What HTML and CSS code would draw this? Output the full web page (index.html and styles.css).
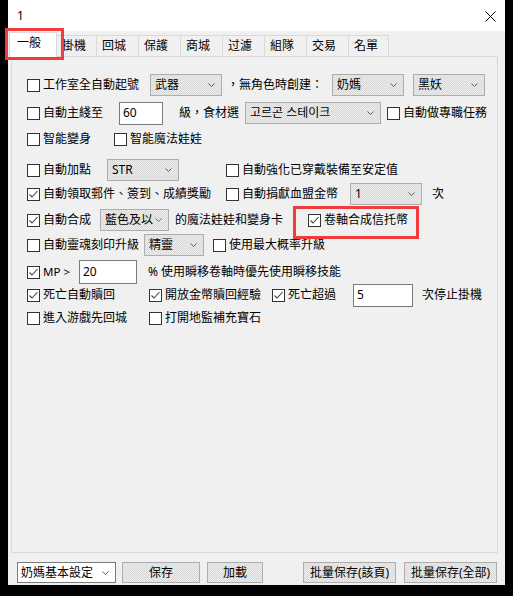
FILE: index.html
```html
<!DOCTYPE html>
<html lang="zh-Hant">
<head>
<meta charset="utf-8">
<title>1</title>
<link rel="stylesheet" href="styles.css">
</head>
<body>
<div class="window">
  <div class="titlebar">
    <span class="title">1</span>
    <svg class="close" width="11" height="11" viewBox="0 0 11 11"><path d="M0.5 0.5 L10.5 10.5 M10.5 0.5 L0.5 10.5" stroke="#000" stroke-width="1" fill="none"/></svg>
  </div>
  <div class="tabs">
    <div class="tab active">一般</div>
    <div class="tab narrow">掛機</div>
    <div class="tab">回城</div>
    <div class="tab">保護</div>
    <div class="tab">商城</div>
    <div class="tab">过濾</div>
    <div class="tab">組隊</div>
    <div class="tab">交易</div>
    <div class="tab narrow">名單</div>
  </div>
  <div class="panel">
    <div class="row">
      <label class="cb c123"><span class="box"></span><span>工作室全自動起號</span></label>
      <div class="sel w72"><span>武器</span><svg class="chev" width="7" height="4" viewBox="0 0 7 4"><polyline points="0.5,0.5 3.5,3.5 6.5,0.5" fill="none" stroke="#666"/></svg></div>
      <span class="txt t1">，無角色時創建：</span>
      <div class="sel w72"><span>奶媽</span><svg class="chev" width="7" height="4" viewBox="0 0 7 4"><polyline points="0.5,0.5 3.5,3.5 6.5,0.5" fill="none" stroke="#666"/></svg></div>
      <div class="sel w72 ml9"><span>黑妖</span><svg class="chev" width="7" height="4" viewBox="0 0 7 4"><polyline points="0.5,0.5 3.5,3.5 6.5,0.5" fill="none" stroke="#666"/></svg></div>
    </div>
    <div class="row g6">
      <label class="cb c92"><span class="box"></span><span>自動主綫至</span></label>
      <div class="inp w44"><span>60</span></div>
      <span class="txt t2">級，食材選</span>
      <div class="sel w136"><span class="kr">고르곤 스테이크</span><svg class="chev" width="7" height="4" viewBox="0 0 7 4"><polyline points="0.5,0.5 3.5,3.5 6.5,0.5" fill="none" stroke="#666"/></svg></div>
      <label class="cb ml6"><span class="box"></span><span>自動做專職任務</span></label>
    </div>
    <div class="row g4">
      <label class="cb c87"><span class="box"></span><span>智能變身</span></label>
      <label class="cb"><span class="box"></span><span>智能魔法娃娃</span></label>
    </div>
    <div class="row g9">
      <label class="cb c80"><span class="box"></span><span>自動加點</span></label>
      <div class="sel w72"><span>STR</span><svg class="chev" width="7" height="4" viewBox="0 0 7 4"><polyline points="0.5,0.5 3.5,3.5 6.5,0.5" fill="none" stroke="#666"/></svg></div>
      <label class="cb ml47"><span class="box"></span><span>自動強化已穿戴裝備至安定值</span></label>
    </div>
    <div class="row g2">
      <label class="cb c199"><span class="box checked"><svg width="11" height="11" viewBox="0 0 11 11"><polyline points="1.5,5.5 4,8 9.5,2" fill="none" stroke="#444" stroke-width="1.1"/></svg></span><span>自動領取郵件、簽到、成績獎勵</span></label>
      <label class="cb c124"><span class="box"></span><span>自動捐獻血盟金幣</span></label>
      <div class="sel w72"><span>1</span><svg class="chev" width="7" height="4" viewBox="0 0 7 4"><polyline points="0.5,0.5 3.5,3.5 6.5,0.5" fill="none" stroke="#666"/></svg></div>
      <span class="txt ml10">次</span>
    </div>
    <div class="row g4">
      <label class="cb c73"><span class="box checked"><svg width="11" height="11" viewBox="0 0 11 11"><polyline points="1.5,5.5 4,8 9.5,2" fill="none" stroke="#444" stroke-width="1.1"/></svg></span><span>自動合成</span></label>
      <div class="sel w69"><span>藍色及以</span><svg class="chev" width="7" height="4" viewBox="0 0 7 4"><polyline points="0.5,0.5 3.5,3.5 6.5,0.5" fill="none" stroke="#666"/></svg></div>
      <span class="txt t6">的魔法娃娃和變身卡</span>
      <label class="cb hl"><span class="box checked"><svg width="11" height="11" viewBox="0 0 11 11"><polyline points="1.5,5.5 4,8 9.5,2" fill="none" stroke="#444" stroke-width="1.1"/></svg></span><span>卷軸合成信托幣</span></label>
    </div>
    <div class="row g3">
      <label class="cb c117"><span class="box"></span><span>自動靈魂刻印升級</span></label>
      <div class="sel w60"><span>精靈</span><svg class="chev" width="7" height="4" viewBox="0 0 7 4"><polyline points="0.5,0.5 3.5,3.5 6.5,0.5" fill="none" stroke="#666"/></svg></div>
      <label class="cb ml9"><span class="box"></span><span>使用最大概率升級</span></label>
    </div>
    <div class="row g5">
      <label class="cb c52"><span class="box checked"><svg width="11" height="11" viewBox="0 0 11 11"><polyline points="1.5,5.5 4,8 9.5,2" fill="none" stroke="#444" stroke-width="1.1"/></svg></span><span class="latin">MP &gt;</span></label>
      <div class="inp w58 h24"><span>20</span></div>
      <span class="txt t8">% 使用瞬移卷軸時優先使用瞬移技能</span>
    </div>
    <div class="row g1">
      <label class="cb c122"><span class="box checked"><svg width="11" height="11" viewBox="0 0 11 11"><polyline points="1.5,5.5 4,8 9.5,2" fill="none" stroke="#444" stroke-width="1.1"/></svg></span><span>死亡自動贖回</span></label>
      <label class="cb c123"><span class="box checked"><svg width="11" height="11" viewBox="0 0 11 11"><polyline points="1.5,5.5 4,8 9.5,2" fill="none" stroke="#444" stroke-width="1.1"/></svg></span><span>開放金幣贖回經驗</span></label>
      <label class="cb c81"><span class="box checked"><svg width="11" height="11" viewBox="0 0 11 11"><polyline points="1.5,5.5 4,8 9.5,2" fill="none" stroke="#444" stroke-width="1.1"/></svg></span><span>死亡超過</span></label>
      <div class="inp w60"><span>5</span></div>
      <span class="txt t9">次停止掛機</span>
    </div>
    <div class="row g1">
      <label class="cb c122"><span class="box"></span><span>進入游戲先回城</span></label>
      <label class="cb"><span class="box"></span><span>打開地監補充寶石</span></label>
    </div>
  </div>
  <div class="footer">
    <div class="fsel"><span>奶媽基本設定</span><svg class="chev" width="7" height="4" viewBox="0 0 7 4"><polyline points="0.5,0.5 3.5,3.5 6.5,0.5" fill="none" stroke="#666"/></svg></div>
    <div class="btn b78 ml6">保存</div>
    <div class="btn b56 ml7">加載</div>
    <div class="btn b93 ml40">批量保存(該頁)</div>
    <div class="btn b93 ml8">批量保存(全部)</div>
  </div>
</div>
</body>
</html>
```
FILE: styles.css
```css
* { box-sizing: border-box; }
html, body { margin: 0; padding: 0; }
body {
  background: #000;
  width: 513px;
  height: 596px;
  overflow: hidden;
  font-family: "Noto Sans", "Noto Sans CJK TC", sans-serif;
  font-size: 12px;
  line-height: 16px;
  color: #000;
}
.window {
  margin-left: 8px;
  width: 497px;
  height: 585px;
  background: #f0f0f0;
  display: flex;
  flex-direction: column;
}
.titlebar {
  flex: none;
  height: 31px;
  background: #fff;
  display: flex;
  align-items: center;
  justify-content: space-between;
  padding: 0 9px;
}
.close { display: block; margin-top: 2px; }

.tabs {
  flex: none;
  height: 25px;
  display: flex;
  align-items: flex-start;
  padding-left: 1px;
  position: relative;
  z-index: 1;
}
.tab {
  position: relative;
  flex: none;
  width: 43px;
  height: 21px;
  margin-top: 4px;
  margin-left: -1px;
  padding-left: 5px;
  border: 1px solid #d9d9d9;
  border-bottom: none;
  background: #f0f0f0;
  line-height: 19px;
}
.tab.narrow { width: 41px; }
.tab.active {
  width: 48px;
  height: 25px;
  margin-top: 1px;
  margin-left: 0;
  padding-left: 7px;
  background: #fff;
  z-index: 2;
  line-height: 20px;
}
.tab.active::after {
  content: "";
  position: absolute;
  left: -5px;
  top: -5px;
  width: 53px;
  height: 26px;
  border: 3px solid #f03c3c;
}

.panel {
  flex: none;
  margin-left: 3px;
  width: 487px;
  height: 497px;
  border: 1px solid #dadada;
  padding: 17px 0 0 15px;
}
.row {
  display: flex;
  align-items: center;
  height: 22px;
  white-space: nowrap;
}
.g1 { margin-top: 1px; }
.g2 { margin-top: 2px; }
.g3 { margin-top: 3px; }
.g4 { margin-top: 4px; }
.g5 { margin-top: 5px; }
.g6 { margin-top: 6px; }
.g9 { margin-top: 9px; }

.cb { display: flex; align-items: center; flex: none; }
.box {
  flex: none;
  width: 13px;
  height: 13px;
  margin-right: 3px;
  border: 1px solid #333;
  background: #fff;
  display: block;
}
.box svg { display: block; }
.latin { font-size: 11.5px; }
.hl { position: relative; }
.hl::after {
  content: "";
  position: absolute;
  left: -15px;
  top: -6px;
  width: 120px;
  height: 27px;
  border: 3px solid #f03c3c;
}

.c52 { width: 52px; }
.c73 { width: 73px; }
.c80 { width: 80px; }
.c81 { width: 81px; }
.c87 { width: 87px; }
.c92 { width: 92px; }
.c117 { width: 117px; }
.c122 { width: 122px; }
.c123 { width: 123px; }
.c124 { width: 124px; }
.c199 { width: 199px; }

.ml6 { margin-left: 6px; }
.ml7 { margin-left: 7px; }
.ml8 { margin-left: 8px; }
.ml9 { margin-left: 9px; }
.ml10 { margin-left: 10px; }
.ml40 { margin-left: 40px; }
.ml47 { margin-left: 47px; }

.txt { flex: none; }
.t1 { width: 110px; padding-left: 5px; }
.t2 { width: 82px; padding-left: 16px; }
.t6 { width: 139px; padding-left: 6px; }
.t8 { padding-left: 11px; }
.t9 { padding-left: 9px; }

.sel {
  flex: none;
  height: 22px;
  display: flex;
  align-items: center;
  justify-content: space-between;
  padding: 0 6px 0 4px;
  border: 1px solid #adadad;
  background: repeating-conic-gradient(#ececec 0 25%, #d9d9d9 0 50%) 0 0 / 2px 2px;
}
.chev { display: block; flex: none; }
.kr { font-family: "Noto Sans", "Noto Sans CJK KR", sans-serif; }
.w44 { width: 44px; }
.w58 { width: 58px; }
.w60 { width: 60px; }
.w69 { width: 69px; }
.w72 { width: 72px; }
.w136 { width: 136px; }

.inp {
  flex: none;
  height: 23px;
  background: #fff;
  border: 1px solid #7a7a7a;
  padding-left: 3px;
  display: flex;
  align-items: center;
}
.h24 { height: 24px; }

.footer {
  flex: none;
  display: flex;
  margin-top: 9px;
  padding-left: 9px;
  height: 21px;
}
.fsel {
  flex: none;
  width: 99px;
  height: 21px;
  display: flex;
  align-items: center;
  justify-content: space-between;
  padding: 0 6px 0 3px;
  background: #fff;
  border: 1px solid #7a7a7a;
}
.btn {
  flex: none;
  height: 21px;
  display: flex;
  align-items: center;
  justify-content: center;
  border: 1px solid #adadad;
  background: repeating-conic-gradient(#ececec 0 25%, #d9d9d9 0 50%) 0 0 / 2px 2px;
}
.b56 { width: 56px; }
.b78 { width: 78px; }
.b93 { width: 93px; }
```
